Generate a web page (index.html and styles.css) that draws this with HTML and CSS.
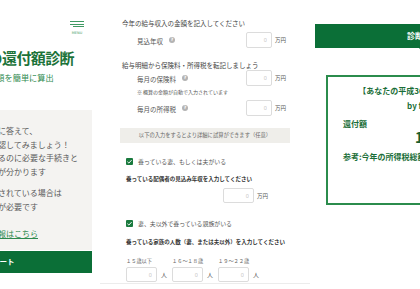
FILE: index.html
```html
<!DOCTYPE html>
<html lang="ja">
<head>
<meta charset="utf-8">
<title>年末調整の還付額診断</title>
<link rel="stylesheet" href="styles.css">
</head>
<body>
<div class="page">
  <aside class="intro">
    <header class="intro-head">
      <div class="menu">
        <span class="bar bar-1"></span>
        <span class="bar bar-2"></span>
        <span class="bar bar-3"></span>
        <span class="menu-label">MENU</span>
      </div>
    </header>
    <h1 class="title">年末調整の還付額診断</h1>
    <p class="subtitle">年末調整の還付額を簡単に算出</p>
    <p class="by">by freee</p>
    <div class="intro-box">
      <p>５つの簡単な質問に答えて、<br>年末の還付額を確認してみましょう！<br>還付金等を受け取るのに必要な手続きと<br>提出する書類などが分かります</p>
      <p>勤務先で年末調整されている場合は<br>ご自身で確定申告が必要です</p>
      <p class="more"><a href="#">年末調整の詳細情報はこちら</a></p>
    </div>
    <a class="start" href="#">診断スタート</a>
  </aside>

  <main class="form">
    <h2 class="q">今年の給与収入の金額を記入してください</h2>
    <div class="field">
      <span class="label">見込年収</span><span class="help">?</span>
      <input class="num" type="text" value="0"><span class="unit">万円</span>
    </div>

    <h2 class="q q-2">給与明細から保険料・所得税を転記しましょう</h2>
    <div class="field">
      <span class="label">毎月の保険料</span><span class="help">?</span>
      <input class="num" type="text" value="0"><span class="unit">万円</span>
    </div>
    <p class="note">※ 概算の金額が自動で入力されています</p>
    <div class="field field-3">
      <span class="label">毎月の所得税</span><span class="help">?</span>
      <input class="num" type="text" value="0"><span class="unit">万円</span>
    </div>

    <div class="band">以下の入力をするとより詳細に試算ができます（任意）</div>

    <label class="check check-1"><span class="box"><svg viewBox="0 0 8 8" width="7" height="7"><path d="M1.6 4.2 L3.3 5.8 L6.4 2.4" fill="none" stroke="#fff" stroke-width="1.1"/></svg></span>養っている妻、もしくは夫がいる</label>
    <h3 class="sub sub-1">養っている配偶者の見込み年収を入力してください</h3>
    <div class="spouse">
      <input class="num num-w" type="text" value="0"><span class="unit">万円</span>
    </div>

    <label class="check check-2"><span class="box"><svg viewBox="0 0 8 8" width="7" height="7"><path d="M1.6 4.2 L3.3 5.8 L6.4 2.4" fill="none" stroke="#fff" stroke-width="1.1"/></svg></span>妻、夫以外で養っている親族がいる</label>
    <h3 class="sub sub-2">養っている家族の人数（妻、または夫以外）を入力してください</h3>
    <div class="ages">
      <div class="age">
        <span class="age-label">１５歳以下</span>
        <div class="age-row"><input class="num num-w" type="text" value="0"><span class="unit">人</span></div>
      </div>
      <div class="age">
        <span class="age-label">１６〜１８歳</span>
        <div class="age-row"><input class="num num-w" type="text" value="0"><span class="unit">人</span></div>
      </div>
      <div class="age">
        <span class="age-label">１９〜２２歳</span>
        <div class="age-row"><input class="num num-w" type="text" value="0"><span class="unit">人</span></div>
      </div>
    </div>
  </main>

  <section class="result">
    <div class="result-head">診断結果</div>
    <div class="result-box">
      <p class="result-title">【あなたの平成30年分の還付金額】<br>by freee</p>
      <p class="result-label">還付額</p>
      <p class="result-amount">10,000円</p>
      <p class="result-ref">参考:今年の所得税総額</p>
    </div>
  </section>
</div>
</body>
</html>
```

FILE: styles.css
```css
* { box-sizing: border-box; margin: 0; padding: 0; }

html, body {
  width: 420px;
  height: 289px;
  overflow: hidden;
  background: #fff;
}

body {
  font-family: "Noto Sans CJK JP", "Noto Sans", sans-serif;
  color: #555;
}

.page {
  display: flex;
  align-items: flex-start;
  width: max-content;
}

/* ---------- left intro ---------- */
.intro {
  width: 200px;
  margin-left: -108px;
  display: flex;
  flex-direction: column;
}

.intro-head {
  height: 40px;
  display: flex;
  justify-content: flex-end;
  padding: 21px 8px 0 0;
}

.menu {
  width: 14px;
  display: flex;
  flex-direction: column;
  align-items: flex-end;
}

.bar {
  display: block;
  height: 1px;
  background: #3f9a63;
  margin-bottom: 1.5px;
}
.bar-1 { width: 14px; }
.bar-2 { width: 14px; }
.bar-3 { width: 11px; }

.menu-label {
  margin-top: 2px;
  font-family: "DejaVu Sans", sans-serif;
  font-size: 3.5px;
  line-height: 4px;
  color: #3f9a63;
  width: 14px;
  text-align: center;
}

.title {
  margin-top: 8px;
  padding-left: 38px;
  font-size: 15px;
  letter-spacing: -0.6px;
  line-height: 19px;
  font-weight: 700;
  color: #1c7339;
  white-space: nowrap;
}

.subtitle {
  margin-top: 4.5px;
  padding-left: 47px;
  font-size: 8.2px;
  line-height: 11px;
  color: #2f8a50;
  white-space: nowrap;
}

.by {
  margin-top: 9px;
  padding-left: 61px;
  font-family: "Noto Sans", sans-serif;
  font-size: 7px;
  line-height: 9px;
  color: #777;
}

.intro-box {
  margin-top: 9.5px;
  height: 140px;
  background: #f4f3f1;
  padding: 14px 0 0 42px;
  font-size: 8px;
  line-height: 13.5px;
  color: #5a5a5a;
  white-space: nowrap;
}

.intro-box p { margin-bottom: 8px; }
.intro-box .more { margin-top: 14px; }
.intro-box a { color: #2d8a4e; text-decoration: underline; }

.start {
  margin-top: 1px;
  height: 22px;
  background: #0b6f37;
  color: #fff;
  font-size: 7.5px;
  font-weight: 700;
  line-height: 22px;
  text-align: center;
  text-decoration: none;
}

/* ---------- middle form ---------- */
.form {
  margin-left: 8px;
  width: 210px;
  padding: 18px 20px 0;
  border-bottom: 1px solid #ececec;
}

.q {
  font-size: 6.5px;
  line-height: 10px;
  font-weight: 400;
  color: #444;
  padding-left: 2px;
  white-space: nowrap;
}
.q-2 { margin-top: 12px; }

.field {
  margin-top: 4px;
  height: 16px;
  display: flex;
  align-items: center;
  padding-left: 17px;
}
.q-2 + .field { margin-top: 0; }
.field-3 { margin-top: 4px; }

.label {
  font-size: 6.5px;
  color: #555;
  white-space: nowrap;
  position: relative;
  top: 1px;
}

.help {
  margin-left: 6px;
  width: 6px;
  height: 6px;
  border-radius: 50%;
  background: #b3b3b3;
  color: #fff;
  font-family: "DejaVu Sans", sans-serif;
  font-size: 4.5px;
  font-weight: 700;
  line-height: 6px;
  text-align: center;
}

.num {
  width: 26px;
  height: 16px;
  border: 1px solid #dcdcdc;
  border-radius: 2px;
  background: #fff;
  padding: 0 4px;
  font-family: "Noto Sans", sans-serif;
  font-size: 5.5px;
  color: #c4c4c4;
  text-align: right;
  outline: none;
}
.field .num { margin-left: auto; }

.unit {
  margin-left: 3px;
  font-size: 5.5px;
  color: #555;
  white-space: nowrap;
  padding-right: 4px;
}

.note {
  margin-top: 2px;
  padding-left: 17px;
  font-size: 5px;
  line-height: 8px;
  color: #555;
  white-space: nowrap;
}

.band {
  margin-top: 12px;
  height: 15px;
  background: #efeeea;
  font-size: 5.3px;
  line-height: 15px;
  color: #666;
  text-align: center;
  white-space: nowrap;
}

.check {
  display: flex;
  align-items: center;
  height: 10px;
  padding-left: 6px;
  font-size: 5.9px;
  color: #555;
  white-space: nowrap;
}
.check-1 { margin-top: 13.5px; }
.check-2 { margin-top: 15px; }

.box {
  width: 7px;
  height: 7px;
  border-radius: 1px;
  background: #1a7a3e;
  margin-right: 5px;
  display: flex;
}

.sub {
  padding-left: 6px;
  font-size: 5.5px;
  line-height: 10px;
  font-weight: 700;
  color: #333;
  white-space: nowrap;
}
.sub-1 { margin-top: 7.5px; }
.sub-2 { margin-top: 9px; }

.spouse {
  margin-top: 4px;
  padding-left: 103px;
  display: flex;
  align-items: center;
  height: 15px;
}

.num-w { width: 31px; height: 15px; }

.ages {
  margin-top: 9px;
  padding-left: 6px;
  display: flex;
  gap: 10px;
  padding-bottom: 1px;
}

.age { width: 36px; display: flex; flex-direction: column; }

.age-label {
  font-size: 5.2px;
  line-height: 10px;
  color: #666;
  white-space: nowrap;
}

.age-row {
  margin-top: 1px;
  display: flex;
  align-items: center;
}
.age-row .unit { margin-left: 4px; padding-right: 0; font-size: 6px; }

/* ---------- right result ---------- */
.result {
  display: flex;
  flex-direction: column;
}

.result-head {
  position: relative;
  margin-top: 24px;
  margin-left: 5px;
  width: 216px;
  height: 24px;
  background: #0b6f37;
  color: #fff;
  font-size: 8px;
  font-weight: 700;
  line-height: 24px;
  text-align: center;
}

.result-head::after {
  content: "";
  position: absolute;
  left: 50%;
  bottom: -4px;
  margin-left: -4px;
  border-left: 4px solid transparent;
  border-right: 4px solid transparent;
  border-top: 4px solid #0b6f37;
}

.result-box {
  margin-top: 27px;
  margin-left: 16px;
  width: 194px;
  height: 130px;
  border: 2px solid #2b8c4c;
  padding: 5.5px 0 0 15px;
  color: #1a6e38;
  font-weight: 700;
}

.result-title {
  font-size: 8px;
  line-height: 15px;
  text-align: center;
  padding-right: 15px;
  white-space: nowrap;
}

.result-label {
  margin-top: 5px;
  font-size: 8px;
  line-height: 11px;
}

.result-amount {
  font-size: 14px;
  line-height: 16px;
  padding-left: 72px;
  color: #1a5e30;
  white-space: nowrap;
}

.result-ref {
  margin-top: 6.5px;
  font-size: 8px;
  line-height: 11px;
  white-space: nowrap;
}
```
